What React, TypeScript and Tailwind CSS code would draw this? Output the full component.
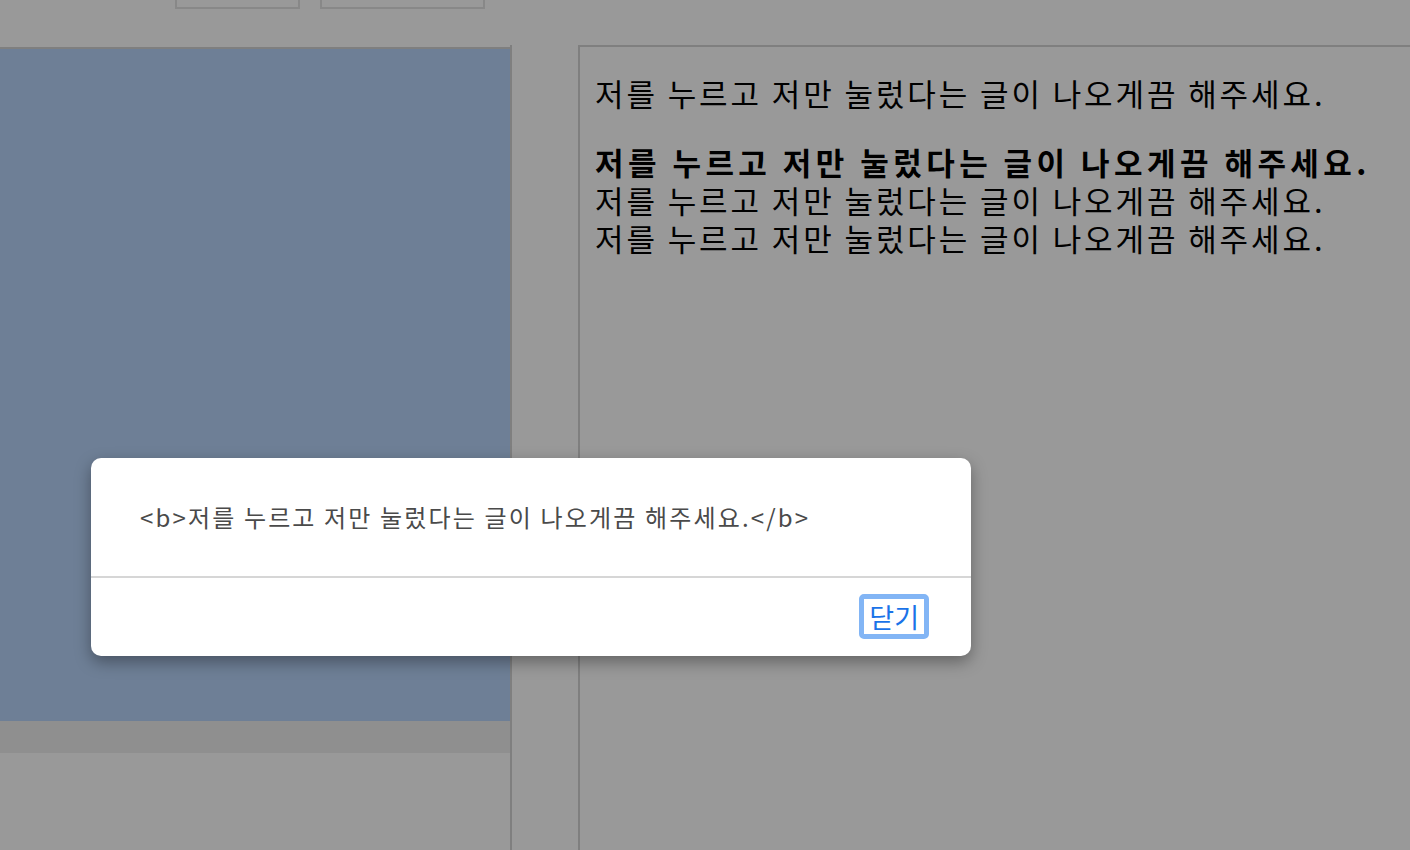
export default function App() {
  const line = '저를 누르고 저만 눌렀다는 글이 나오게끔 해주세요.';
  return (
    <div className="relative h-[850px] w-[1410px] overflow-hidden bg-[#999999] font-['Noto_Sans_CJK_KR',sans-serif]">
      {/* top buttons, cut off by the viewport */}
      <div className="flex h-[9px] gap-[20px] pl-[175px]">
        <div className="h-[9px] w-[125px] border-2 border-t-0 border-[#888888]" />
        <div className="h-[9px] w-[165px] border-2 border-t-0 border-[#888888]" />
      </div>

      <div className="mt-[36px] flex gap-[66px]">
        {/* left preview panel */}
        <div className="flex h-[805px] w-[512px] flex-col border-r-2 border-[#7f7f7f]">
          <div className="mt-[2px] h-[674px] border-t-2 border-[#7f7f7f] bg-[#6e7f96]" />
          <div className="h-[32px] bg-[#8f8f8f]" />
        </div>

        {/* right output panel */}
        <div className="h-[805px] flex-1 border-l-2 border-t-2 border-[#7f7f7f] pl-[15px] pt-[27px] text-[31px] leading-[38px] tracking-[2.9px] text-black">
          <p>{line}</p>
          <p className="mt-[31px] font-bold tracking-[4.45px]">{line}</p>
          <p>{line}</p>
          <p>{line}</p>
        </div>
      </div>

      {/* alert dialog */}
      <div className="absolute left-[91px] top-[458px] w-[880px] rounded-[10px] bg-white shadow-[0_6px_16px_rgba(0,0,0,0.35)]">
        <div className="flex h-[118px] items-center pl-[49px] text-[24px] tracking-[2.15px] text-[#4a4a4a]">
          &lt;b&gt;{line}&lt;/b&gt;
        </div>
        <div className="h-[2px] bg-[#d6d6d6]" />
        <div className="flex h-[78px] items-center justify-end pr-[42px]">
          <button className="mb-[2px] rounded-[5px] border-[5px] border-[#82b5f5] px-[5px] text-[27px] leading-[35px] text-[#1a73e8]">
            닫기
          </button>
        </div>
      </div>
    </div>
  );
}
